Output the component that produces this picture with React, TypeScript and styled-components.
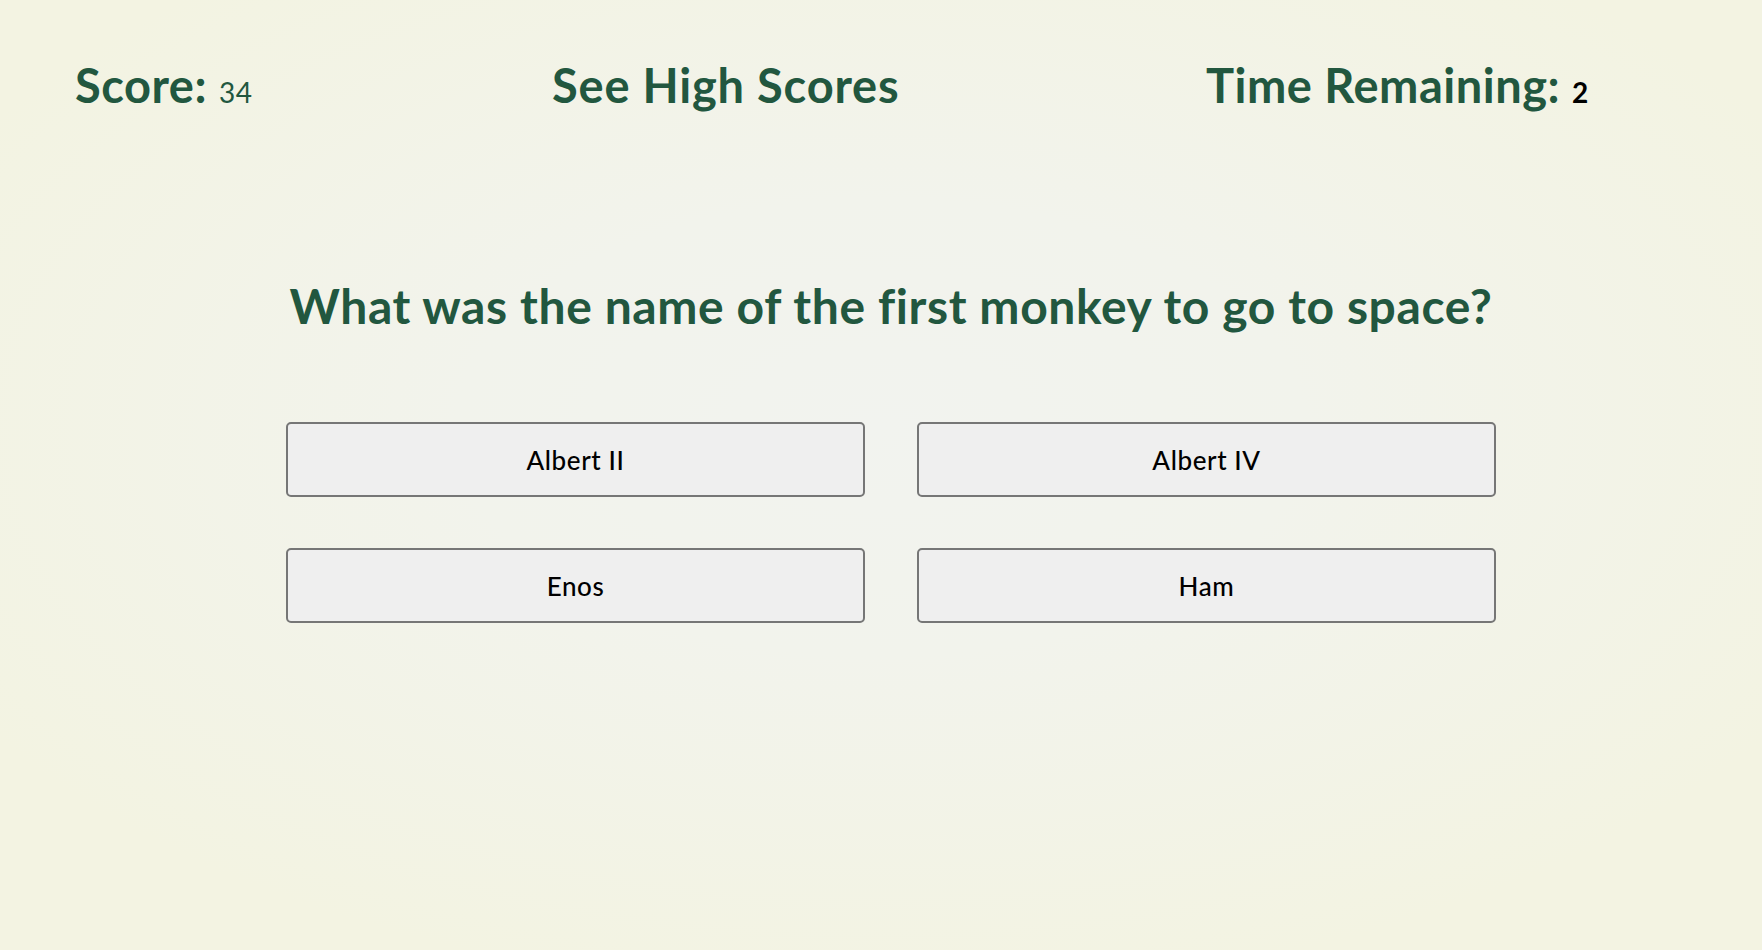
import React from "react";
import styled, { createGlobalStyle } from "styled-components";

const GlobalStyle = createGlobalStyle`
  html, body {
    margin: 0;
    padding: 0;
  }
  body {
    font-family: Lato, "Noto Sans", sans-serif;
    background: #f3f3e2;
  }
`;

const Page = styled.div`
  width: 1762px;
  height: 950px;
  box-sizing: border-box;
  background: radial-gradient(ellipse 60% 60% at 50% 45%, #f2f3ef 0%, #f2f3ec 40%, #f3f3e2 100%);
  overflow: hidden;
`;

const Header = styled.header`
  display: grid;
  grid-template-columns: 477px 654px auto;
  align-items: baseline;
  padding: 57px 0 0 75px;
`;

const HeaderItem = styled.div`
  font-family: Lato, "Noto Sans", sans-serif;
  font-size: 47px;
  font-weight: 700;
  color: #22573f;
  letter-spacing: 0.5px;
  white-space: nowrap;
`;

const HeaderLink = styled.a`
  font-family: Lato, "Noto Sans", sans-serif;
  font-size: 47px;
  font-weight: 700;
  color: #22573f;
  text-decoration: none;
  letter-spacing: 0.8px;
  white-space: nowrap;
  cursor: pointer;
`;

const Value = styled.span<{ $dark?: boolean }>`
  font-size: 28px;
  font-weight: ${(p) => (p.$dark ? 700 : 400)};
  color: ${(p) => (p.$dark ? "#000" : "#22573f")};
  margin-left: 12px;
`;

const Main = styled.main`
  width: 1210px;
  margin: 0 0 0 286px;
  display: flex;
  flex-direction: column;
  align-items: stretch;
`;

const Question = styled.h2`
  margin: 163px 0 0 0;
  text-align: center;
  font-family: Lato, "Noto Sans", sans-serif;
  font-size: 48px;
  font-weight: 700;
  color: #22573f;
  letter-spacing: 0.6px;
  line-height: 60px;
  white-space: nowrap;
`;

const Answers = styled.div`
  display: grid;
  grid-template-columns: 1fr 1fr;
  column-gap: 52px;
  row-gap: 51px;
  margin-top: 86px;
`;

const AnswerButton = styled.button`
  height: 75px;
  box-sizing: border-box;
  background: #efefef;
  border: 2px solid #767676;
  border-radius: 5px;
  font-family: Lato, "Noto Sans", sans-serif;
  font-size: 26px;
  font-weight: 500;
  letter-spacing: 0.6px;
  color: #000;
  cursor: pointer;
`;

const answers = ["Albert II", "Albert IV", "Enos", "Ham"];

export default function App() {
  return (
    <Page>
      <GlobalStyle />
      <Header>
        <HeaderItem>
          Score:<Value>34</Value>
        </HeaderItem>
        <HeaderLink>See High Scores</HeaderLink>
        <HeaderItem>
          Time Remaining:<Value $dark>2</Value>
        </HeaderItem>
      </Header>
      <Main>
        <Question>What was the name of the first monkey to go to space?</Question>
        <Answers>
          {answers.map((a) => (
            <AnswerButton key={a}>{a}</AnswerButton>
          ))}
        </Answers>
      </Main>
    </Page>
  );
}
